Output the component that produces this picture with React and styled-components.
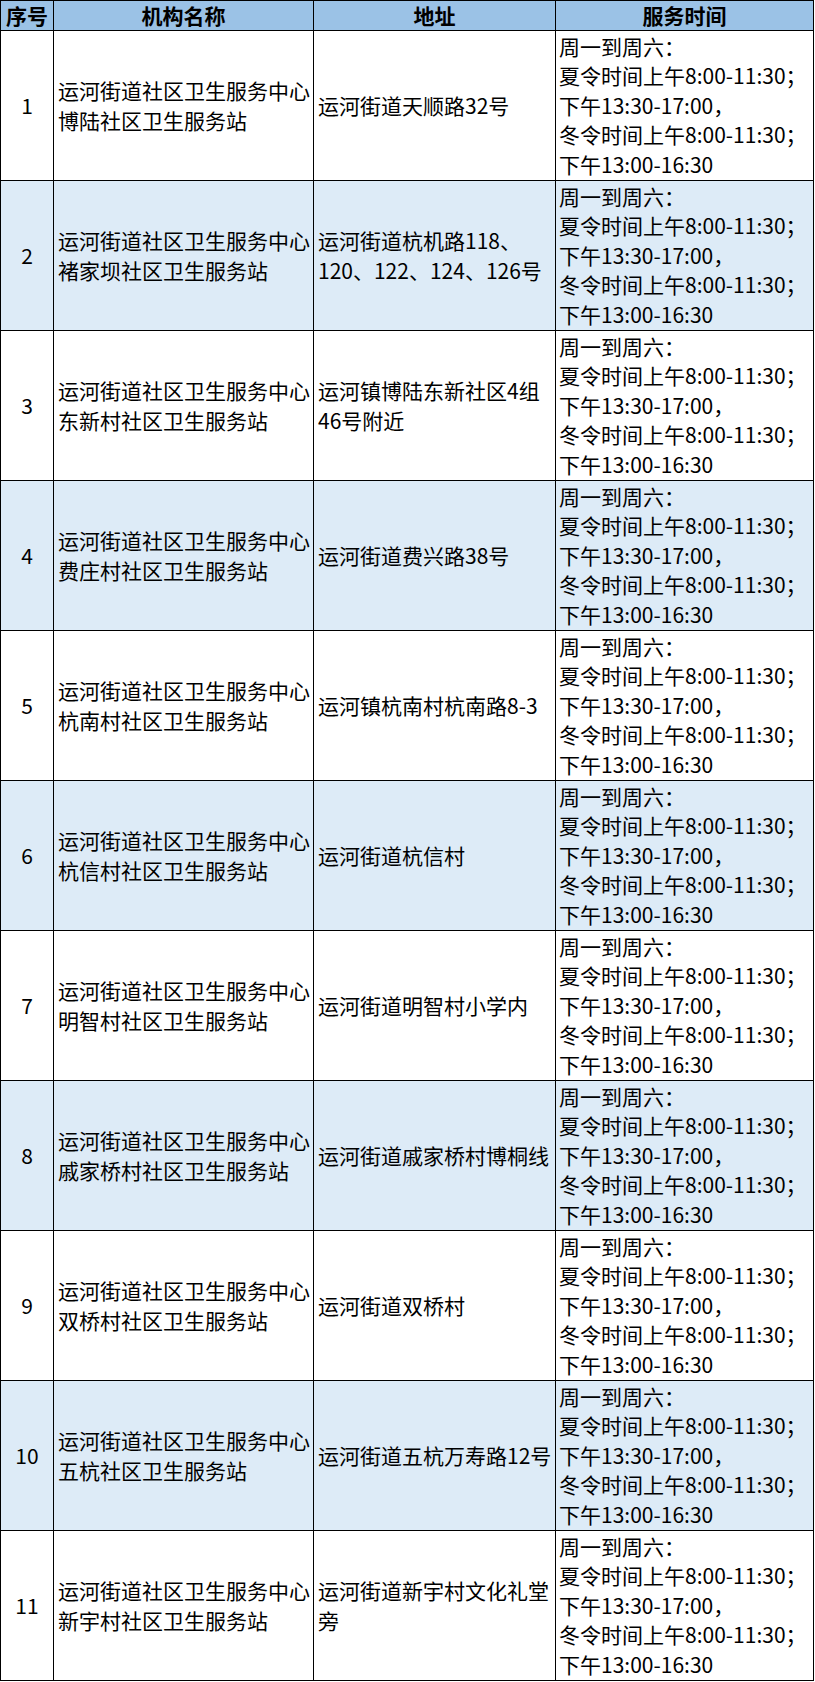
import React from 'react';
import styled, { createGlobalStyle } from 'styled-components';

const GlobalStyle = createGlobalStyle`
  body {
    margin: 0;
    background: #fff;
    font-family: "Noto Sans CJK SC", "Noto Sans", sans-serif;
    color: #000;
  }
`;

// one hours block is the same for every station
const HOURS = [
  '周一到周六：',
  '夏令时间上午8:00-11:30；',
  '下午13:30-17:00，',
  '冬令时间上午8:00-11:30；',
  '下午13:00-16:30',
];

const stations = [
  { name: '博陆社区卫生服务站', addr: ['运河街道天顺路32号'] },
  { name: '褚家坝社区卫生服务站', addr: ['运河街道杭机路118、', '120、122、124、126号'] },
  { name: '东新村社区卫生服务站', addr: ['运河镇博陆东新社区4组', '46号附近'] },
  { name: '费庄村社区卫生服务站', addr: ['运河街道费兴路38号'] },
  { name: '杭南村社区卫生服务站', addr: ['运河镇杭南村杭南路8-3'] },
  { name: '杭信村社区卫生服务站', addr: ['运河街道杭信村'] },
  { name: '明智村社区卫生服务站', addr: ['运河街道明智村小学内'] },
  { name: '戚家桥村社区卫生服务站', addr: ['运河街道戚家桥村博桐线'] },
  { name: '双桥村社区卫生服务站', addr: ['运河街道双桥村'] },
  { name: '五杭社区卫生服务站', addr: ['运河街道五杭万寿路12号'] },
  { name: '新宇村社区卫生服务站', addr: ['运河街道新宇村文化礼堂', '旁'] },
];

function App() {
  return (
    <>
      <GlobalStyle />
      <Sheet>
        <HeadRow>
          <HeadCell>序号</HeadCell>
          <HeadCell>机构名称</HeadCell>
          <HeadCell>地址</HeadCell>
          <HeadCell>服务时间</HeadCell>
        </HeadRow>
        {stations.map((s, i) => (
          <Row key={i} $shade={i % 2 === 1}>
            <Cell $center>{i + 1}</Cell>
            <Cell $pad={4}>
              <Lines>
                <Line>运河街道社区卫生服务中心</Line>
                <Line>{s.name}</Line>
              </Lines>
            </Cell>
            <Cell $pad={4}>
              <Lines>
                {s.addr.map((a) => (
                  <Line key={a}>{a}</Line>
                ))}
              </Lines>
            </Cell>
            <Cell $pad={3}>
              <Lines>
                {HOURS.map((h, k) => (
                  <Line key={k}>{h}</Line>
                ))}
              </Lines>
            </Cell>
          </Row>
        ))}
      </Sheet>
    </>
  );
}

const Sheet = styled.div`
  width: 814px;
  box-sizing: border-box;
  border-left: 1px solid #000;
  border-top: 1px solid #000;
`;

const HeadRow = styled.div`
  display: grid;
  grid-template-columns: 53px 260px 242px 258px;
  height: 30px;
  background-color: #9bc2e6;
`;

const HeadCell = styled.div`
  box-sizing: border-box;
  border-right: 1px solid #000;
  border-bottom: 1px solid #000;
  display: flex;
  align-items: center;
  justify-content: center;
  font-size: 21px;
  font-weight: 700;
  line-height: 29px;
`;

const Row = styled.div`
  display: grid;
  grid-template-columns: 53px 260px 242px 258px;
  height: 150px;
  background-color: ${(p) => (p.$shade ? '#ddebf7' : '#fff')};
`;

const Cell = styled.div`
  box-sizing: border-box;
  border-right: 1px solid #000;
  border-bottom: 1px solid #000;
  display: flex;
  align-items: center;
  justify-content: ${(p) => (p.$center ? 'center' : 'flex-start')};
  padding-left: ${(p) => (p.$pad ? p.$pad : 0)}px;
  font-size: 21px;
  line-height: 29.5px;
  overflow: hidden;
`;

const Lines = styled.div`
  display: flex;
  flex-direction: column;
`;

const Line = styled.span`
  white-space: nowrap;
`;

export default App;
